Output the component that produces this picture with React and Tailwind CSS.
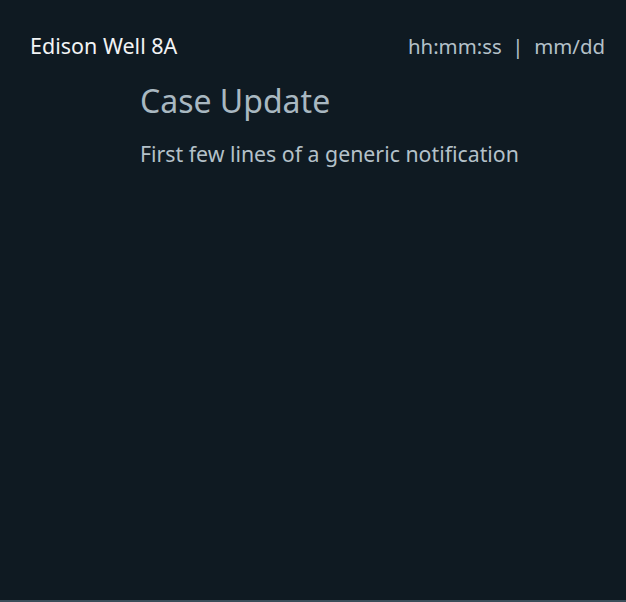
export default function App() {
  return (
    <div className="w-[626px] h-[602px] bg-[#0f1a22] border-b-2 border-[#3b4e5a] flex flex-col" style={{ fontFamily: '"Noto Sans", sans-serif' }}>
      <div className="flex justify-between items-center pl-[30px] pr-[21px] pt-[32px]">
        <span className="text-[21.5px] leading-[28px] text-[#f2f4f5]">Edison Well 8A</span>
        <span className="text-[20.4px] leading-[28px] text-[#b4c1c9]">hh:mm:ss&nbsp;&nbsp;|&nbsp;&nbsp;mm/dd</span>
      </div>
      <div className="pl-[140px] pt-[21px] flex flex-col gap-[19px]">
        <span className="text-[32px] leading-[40px] text-[#a9b8c1]">Case Update</span>
        <span className="text-[21.3px] leading-[28px] text-[#b4c1c9]">First few lines of a generic notification</span>
      </div>
    </div>
  );
}
